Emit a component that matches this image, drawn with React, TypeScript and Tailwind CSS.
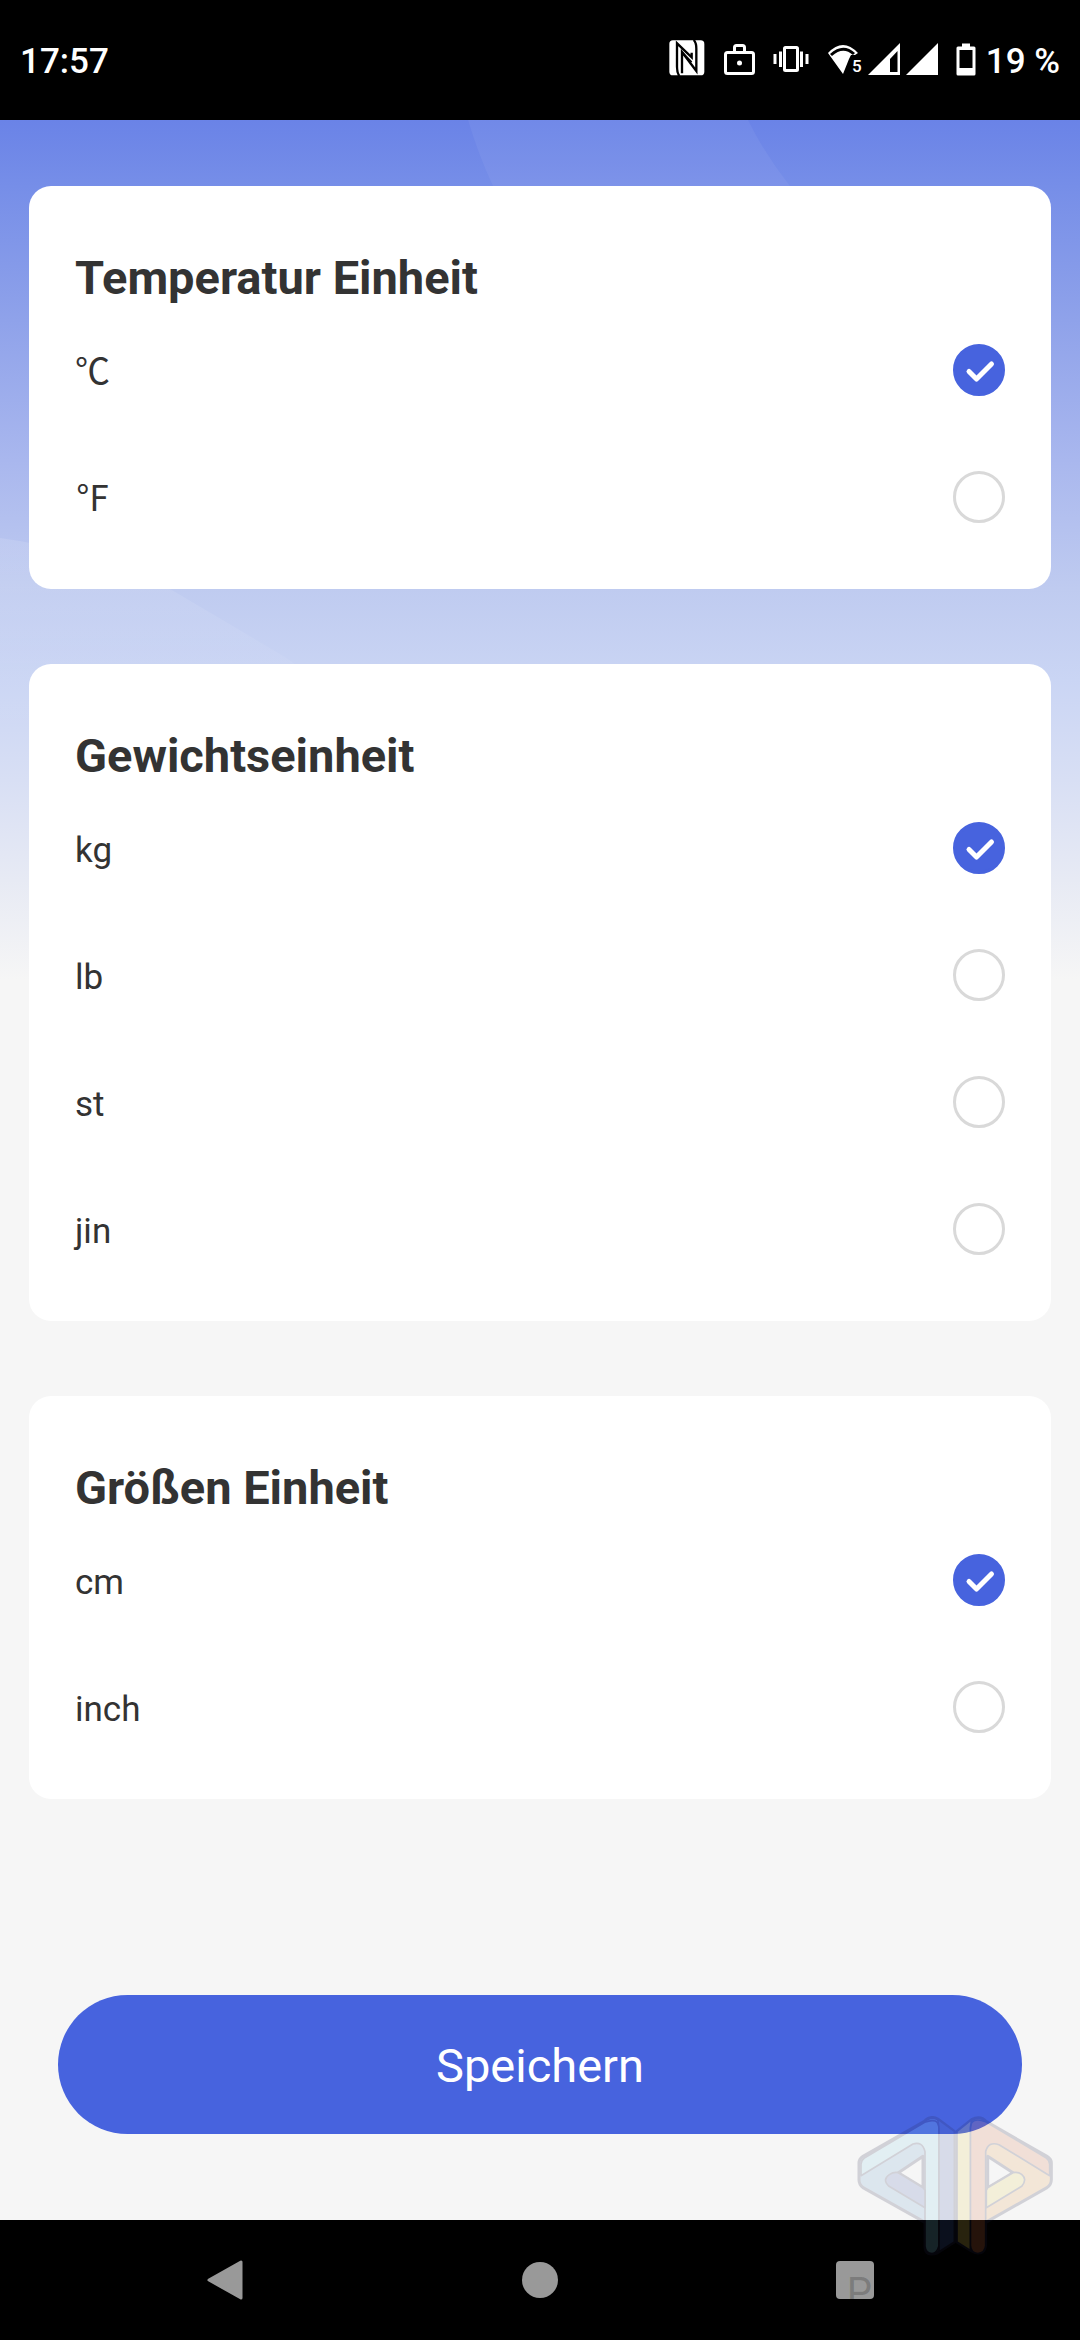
import { useState } from "react";

type UnitGroup = {
  name: string;
  title: string;
  options: string[];
};

const unitGroups: UnitGroup[] = [
  { name: "temperature", title: "Temperatur Einheit", options: ["℃", "℉"] },
  { name: "weight", title: "Gewichtseinheit", options: ["kg", "lb", "st", "jin"] },
  { name: "height", title: "Größen Einheit", options: ["cm", "inch"] },
];

function StatusBar() {
  return (
    <header className="h-[120px] shrink-0 bg-black text-white px-5 flex items-center justify-between text-[35px] leading-[40px] font-medium">
      <span className="pt-[3px]">17:57</span>
      <div className="flex items-center gap-[10px]">
        <div className="flex items-center gap-[18px] pb-1">
          {/* NFC */}
          <svg width="36" height="36" viewBox="0 0 108 108" fill="none">
            <rect x="1" y="1" width="105" height="105" rx="11" fill="white" />
            <path d="M31 108C25 100 24 94 24 80V10L68 52V38" stroke="black" strokeWidth="7" />
            <path d="M39 100V36L82 93V26C82 12 80 6 74 0" stroke="black" strokeWidth="7" />
            <path d="M39 36L68 66" stroke="black" strokeWidth="5" />
          </svg>
          {/* work profile */}
          <svg width="32" height="36" viewBox="0 0 32 36" fill="none" stroke="white">
            <rect x="2.5" y="12.5" width="28" height="21" rx="2" strokeWidth="3" />
            <path d="M11.5 12V7.5Q11.5 5.5 13.5 5.5H19.5Q21.5 5.5 21.5 7.5V12" strokeWidth="3" />
            <circle cx="16.5" cy="23" r="2.5" fill="white" stroke="none" />
          </svg>
          {/* vibrate */}
          <svg width="36" height="36" viewBox="0 0 36 36" fill="none" stroke="white">
            <rect x="11.5" y="7.5" width="13" height="23" rx="1" strokeWidth="3" />
            <path d="M7.5 11.5V27M28.5 11.5V27" strokeWidth="3" />
            <path d="M2 14V24M34 14V24" strokeWidth="3" />
          </svg>
          <div className="flex items-center gap-[6px]">
            {/* wifi 5 */}
            <span className="relative">
              <svg width="35" height="36" viewBox="0 0 35 36" fill="none">
                <path d="M1 13Q16 -3 31 13L28 15H24L22 19L16 34Z" fill="white" />
                <path d="M4 15Q16 4 27 14" stroke="black" strokeWidth="3" />
                <path d="M24 16H35V36H17Z" fill="black" />
              </svg>
              <span className="absolute right-0 bottom-0 text-[17px] leading-[20px]">5</span>
            </span>
            <svg width="32" height="36" viewBox="0 0 32 36">
              <path d="M32 3V35H0Z" fill="white" />
              <path d="M22 19L29.5 11V32H22Z" fill="black" />
            </svg>
            <svg width="32" height="36" viewBox="0 0 32 36">
              <path d="M32 3V35H0Z" fill="white" />
            </svg>
          </div>
          {/* battery */}
          <svg width="20" height="36" viewBox="0 0 20 36">
            <path d="M6 3.5H14V6.5H18Q19.5 6.5 19.5 8V34Q19.5 35.5 18 35.5H2Q0.5 35.5 0.5 34V8Q0.5 6.5 2 6.5H6Z" fill="white" />
            <path d="M3.5 10H16.5V28H3.5Z" fill="black" />
          </svg>
        </div>
        <span className="pt-[3px]">19 %</span>
      </div>
    </header>
  );
}

function UnitCard({ group }: { group: UnitGroup }) {
  const [selected, setSelected] = useState(group.options[0]);

  return (
    <section className="bg-white rounded-[22px] px-[46px] pt-[64px] pb-[29px]">
      <h2 className="text-[47px] leading-[56px] font-bold">{group.title}</h2>
      {group.options.map((option) => (
        <label key={option} className="h-[127px] flex items-center justify-between cursor-pointer">
          <span className="text-[35px] leading-[40px] pt-[6px]">{option}</span>
          <span className="relative size-[52px]">
            <input
              type="radio"
              name={group.name}
              value={option}
              checked={selected === option}
              onChange={() => setSelected(option)}
              className="peer block appearance-none size-[52px] rounded-full border-[3px] border-[#d9d9d9] bg-white checked:border-[#4763de] checked:bg-[#4763de] cursor-pointer"
            />
            <svg
              className="absolute inset-0 hidden peer-checked:block pointer-events-none"
              width="52"
              height="52"
              viewBox="0 0 52 52"
              fill="none"
            >
              <path d="M16 27.500L23.500 35L38.500 20" stroke="white" strokeWidth="5" strokeLinecap="round" strokeLinejoin="round" />
            </svg>
          </span>
        </label>
      ))}
    </section>
  );
}

function NavigationBar() {
  return (
    <nav className="h-[120px] shrink-0 bg-black px-[68px] grid grid-cols-3 items-center justify-items-center">
      <button aria-label="Zurück" className="size-[40px]">
        <svg width="40" height="40" viewBox="0 0 40 40">
          <path d="M4 20L36 2V38Z" fill="#999999" stroke="#999999" strokeWidth="3" strokeLinejoin="round" />
        </svg>
      </button>
      <button aria-label="Startseite" className="size-[36px] rounded-full bg-[#999999]" />
      <button aria-label="Übersicht" className="relative size-[38px] rounded bg-[#999999]">
        <span className="absolute left-[11px] top-[12px] text-[40px] leading-[40px] text-black/20">P</span>
      </button>
    </nav>
  );
}

// Penrose style logo in the lower right corner
function CornerLogo() {
  return (
    <svg
      className="absolute right-5 bottom-20 pointer-events-none opacity-[0.17]"
      width="207"
      height="147"
      viewBox="100 100 621 441"
      stroke="#222244"
      strokeWidth="5"
      strokeLinejoin="round"
    >
      {/* left half */}
      <path
        d="M313 126Q332 106 354 118L404 155V487L352 520Q316 532 316 498V428L130 324Q118 314 118 300V250Q118 238 130 230ZM310 230L236 279L310 324Z"
        fill="#649bcd"
        fillRule="evenodd"
        strokeWidth="9"
      />
      <path d="M124 288V254Q124 242 134 235L315 128Q356 112 358 145V498Q352 520 337 522Q318 520 316 500V216Q308 184 280 193Z" fill="#85cfe8" />
      <path d="M354 118L404 155V487L358 516V145Z" fill="#435eac" />
      <path d="M236 279L310 324L316 332V384L208 320Q186 299 210 284Q222 276 236 279Z" fill="#435eac" />
      {/* right half */}
      <path
        d="M500 126Q482 106 456 120L412 155V487L456 514Q496 532 498 492V428L682 324Q695 314 695 300V250Q695 238 682 230ZM504 230L580 279L504 324Z"
        fill="#e99b43"
        fillRule="evenodd"
        strokeWidth="9"
      />
      <path d="M690 288V254Q690 242 680 235L498 126Q454 110 452 145V498Q454 520 474 522Q496 520 498 498V216Q506 184 538 195Z" fill="#d97443" />
      <path d="M456 120L412 155V487L452 512V145Z" fill="#e9ce53" />
      <path d="M580 279L504 324L500 332V384L606 320Q624 299 606 284Q594 276 580 279Z" fill="#e9ce53" />
    </svg>
  );
}

export default function App() {
  return (
    <div className="relative min-h-screen flex flex-col font-[Roboto,'Noto_Sans_CJK_SC',sans-serif] text-[#333333]">
      <StatusBar />

      <main className="relative flex-1 flex flex-col px-[29px] pt-[66px] pb-[86px] bg-[#f6f6f6] bg-[linear-gradient(#6a83e7_0px,#768ee8_66px,#8fa2ea_200px,#a9b7ee_340px,#bfcbf0_469px,#cad5f4_560px,#d8dff4_660px,#e7eaf4_760px,#f6f6f6_860px)]">
        {/* light rays on the header background */}
        <svg className="absolute inset-x-0 top-0 w-full h-[860px]" viewBox="0 0 1080 860" preserveAspectRatio="none">
          <defs>
            <linearGradient id="ray" x1="0" y1="418" x2="0" y2="620" gradientUnits="userSpaceOnUse">
              <stop offset="0" stopColor="white" stopOpacity="0.12" />
              <stop offset="1" stopColor="white" stopOpacity="0" />
            </linearGradient>
          </defs>
          <path d="M468 0H748Q766 36 790 66L493 66Q478 34 468 0Z" fill="white" fillOpacity="0.05" />
          <path d="M0 418Q90 430 170 469L285 537L400 620H0Z" fill="url(#ray)" />
        </svg>

        <form className="relative flex-1 flex flex-col justify-between" onSubmit={(e) => e.preventDefault()}>
          <div className="flex flex-col gap-[75px]">
            {unitGroups.map((group) => (
              <UnitCard key={group.name} group={group} />
            ))}
          </div>

          <button
            type="submit"
            className="mx-[29px] h-[139px] pt-[3px] rounded-full bg-[#4763de] text-white text-[47px] leading-[60px] cursor-pointer"
          >
            Speichern
          </button>
        </form>
      </main>

      <NavigationBar />
      <CornerLogo />
    </div>
  );
}
